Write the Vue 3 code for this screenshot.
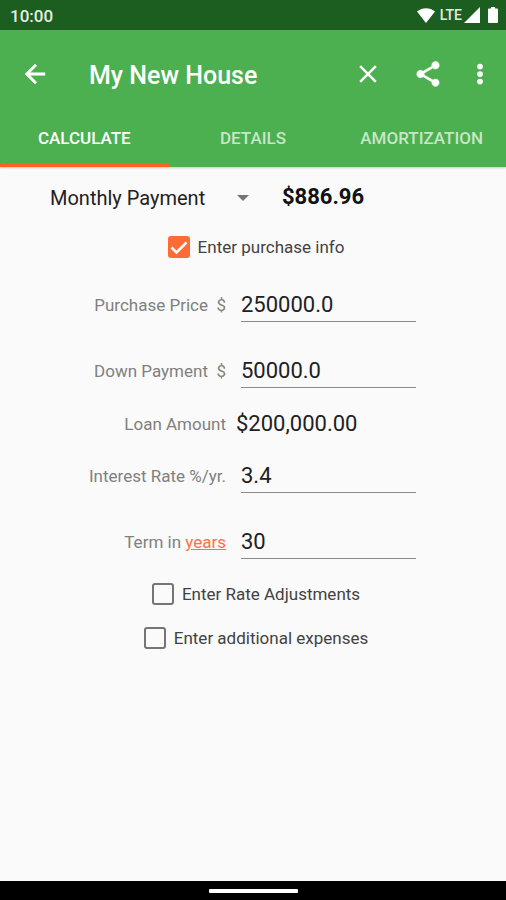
<script setup>
import { ref } from 'vue'

const tabs = ['Calculate', 'Details', 'Amortization']
const activeTab = ref('Calculate')
const mode = ref('Monthly Payment')
const purchaseInfo = ref(true)
const rateAdjustments = ref(false)
const extraExpenses = ref(false)
const price = ref('250000.0')
const down = ref('50000.0')
const rate = ref('3.4')
const term = ref('30')
</script>

<template>
  <div class="app">
    <div class="status">
      <span class="clock">10:00</span>
      <div class="signals">
        <svg class="wifi" viewBox="0 0 18 15" aria-hidden="true"><path d="M0 3.6C5 -1 13 -1 18 3.6L9 15z" /></svg>
        <span class="lte">LTE</span>
        <svg class="cell" viewBox="0 0 16 16" aria-hidden="true"><path d="M16 0v16H0z" /></svg>
        <svg class="battery" viewBox="0 0 10 16" aria-hidden="true"><path d="M3 0h4v1.6h2a1 1 0 0 1 1 1V15a1 1 0 0 1-1 1H1a1 1 0 0 1-1-1V2.6a1 1 0 0 1 1-1h2z" /></svg>
      </div>
    </div>

    <header class="header">
      <div class="toolbar">
        <button class="icon-button" type="button" aria-label="Back">
          <svg class="bold" viewBox="0 0 24 24"><path d="M20 11H7.83l5.59-5.59L12 4l-8 8 8 8 1.41-1.41L7.83 13H20v-2z" /></svg>
        </button>
        <h1 class="title">My New House</h1>
        <div class="actions">
          <button class="icon-button" type="button" aria-label="Clear">
            <svg viewBox="0 0 24 24"><path d="M19 6.41L17.59 5 12 10.59 6.41 5 5 6.41 10.59 12 5 17.59 6.41 19 12 13.41 17.59 19 19 17.59 13.41 12z" /></svg>
          </button>
          <button class="icon-button" type="button" aria-label="Share">
            <svg class="bold" viewBox="0 0 24 24"><path d="M18 16.08c-.76 0-1.44.3-1.96.77L8.91 12.7c.05-.23.09-.46.09-.7s-.04-.47-.09-.7l7.05-4.11c.54.5 1.25.81 2.04.81 1.66 0 3-1.34 3-3s-1.34-3-3-3-3 1.34-3 3c0 .24.04.47.09.7L8.04 9.81C7.5 9.31 6.79 9 6 9c-1.66 0-3 1.34-3 3s1.34 3 3 3c.79 0 1.5-.31 2.04-.81l7.12 4.16c-.05.21-.08.43-.08.65 0 1.61 1.31 2.92 2.92 2.92s2.92-1.31 2.92-2.92-1.31-2.92-2.92-2.92z" /></svg>
          </button>
          <button class="icon-button more" type="button" aria-label="More options">
            <svg viewBox="0 0 24 24"><circle cx="12" cy="6" r="2.3" /><circle cx="12" cy="12" r="2.3" /><circle cx="12" cy="18" r="2.3" /></svg>
          </button>
        </div>
      </div>
      <nav class="tabs">
        <button
          v-for="tab in tabs"
          :key="tab"
          type="button"
          class="tab"
          :class="{ active: tab === activeTab }"
          @click="activeTab = tab"
        >{{ tab }}</button>
      </nav>
    </header>

    <main class="content">
      <div class="summary">
        <div class="spinner">
          <select v-model="mode" aria-label="Calculate for">
            <option>Monthly Payment</option>
          </select>
          <svg viewBox="0 0 12 6" aria-hidden="true"><path d="M0 0h12L6 6z" /></svg>
        </div>
        <output class="payment">$886.96</output>
      </div>

      <label class="check">
        <input v-model="purchaseInfo" type="checkbox" />
        <span class="box"><svg viewBox="0 0 22 22"><path d="M3.5 11.5l5 5L18.5 6.5" /></svg></span>
        <span>Enter purchase info</span>
      </label>

      <div class="form">
        <label class="name" for="price">Purchase Price&nbsp; $</label>
        <input id="price" v-model="price" class="field" type="text" inputmode="decimal" />
        <label class="name" for="down">Down Payment&nbsp; $</label>
        <input id="down" v-model="down" class="field" type="text" inputmode="decimal" />
        <label class="name short" for="loan">Loan Amount</label>
        <output id="loan" class="loan">$200,000.00</output>
        <label class="name" for="rate">Interest Rate %/yr.</label>
        <input id="rate" v-model="rate" class="field" type="text" inputmode="decimal" />
        <div class="name"><label for="term">Term in</label>&nbsp;<a href="#">years</a></div>
        <input id="term" v-model="term" class="field" type="text" inputmode="numeric" />
      </div>

      <div class="options">
        <label class="check">
          <input v-model="rateAdjustments" type="checkbox" />
          <span class="box"><svg viewBox="0 0 22 22"><path d="M3.5 11.5l5 5L18.5 6.5" /></svg></span>
          <span>Enter Rate Adjustments</span>
        </label>
        <label class="check">
          <input v-model="extraExpenses" type="checkbox" />
          <span class="box"><svg viewBox="0 0 22 22"><path d="M3.5 11.5l5 5L18.5 6.5" /></svg></span>
          <span>Enter additional expenses</span>
        </label>
      </div>
    </main>

    <div class="navbar"><span class="pill"></span></div>
  </div>
</template>

<style>
body {
  margin: 0;
  background: #fafafa;
}
</style>

<style scoped>
.app {
  display: flex;
  flex-direction: column;
  min-height: 100vh;
  background: #fafafa;
  color: #212121;
  font-family: Roboto, "Liberation Sans", sans-serif;
  font-size: 17px;
}

button,
input,
select {
  font: inherit;
  color: inherit;
  border: 0;
  border-radius: 0;
  background: none;
  padding: 0;
  margin: 0;
  outline: none;
}

svg {
  display: block;
}

.status {
  display: flex;
  align-items: center;
  justify-content: space-between;
  height: 30px;
  padding: 0 8px 0 10px;
  background: #1b5e20;
  color: #fff;
}

.clock {
  padding-top: 1px;
  color: #e4ece4;
  font-size: 17px;
  font-weight: 500;
}

.signals {
  display: flex;
  align-items: center;
  fill: #fff;
}

.wifi {
  width: 18px;
  height: 15px;
}

.lte {
  margin: 0 2px 0 5px;
  color: #e4ece4;
  font-size: 14px;
  font-weight: 500;
}

.cell {
  width: 16px;
  height: 16px;
}

.battery {
  width: 10px;
  height: 16px;
  margin-left: 8px;
}

.header {
  background: #4caf50;
  color: #fff;
  box-shadow: 0 1px 2px rgba(0, 0, 0, 0.2);
}

.toolbar {
  display: flex;
  align-items: center;
  height: 82px;
  padding: 6px 11px 0 20px;
  box-sizing: border-box;
}

.icon-button {
  display: grid;
  place-items: center;
  width: 30px;
  height: 48px;
  fill: #fff;
}

.icon-button svg {
  width: 30px;
  height: 30px;
}

.icon-button .bold {
  stroke: #fff;
  stroke-width: 0.4;
}

.title {
  flex: 1;
  margin: 0 0 0 39px;
  padding-top: 2px;
  font-size: 25px;
  font-weight: 500;
}

.actions {
  display: flex;
  gap: 30px;
}

.more {
  margin-left: -8px;
}

.tabs {
  display: grid;
  grid-template-columns: repeat(3, 1fr);
  height: 55px;
}

.tab {
  border-bottom: 3px solid transparent;
  color: rgba(255, 255, 255, 0.7);
  font-weight: 500;
  text-transform: uppercase;
}

.tab.active {
  border-bottom-color: #ff6322;
  color: #fff;
}

.content {
  flex: 1;
}

.summary {
  display: grid;
  grid-template-columns: 202px 174px;
  justify-content: center;
  align-items: center;
  gap: 30px;
  height: 61px;
}

.spinner {
  position: relative;
  font-size: 20px;
}

.spinner select {
  width: 100%;
  height: 40px;
  appearance: none;
}

.spinner svg {
  position: absolute;
  top: 17px;
  right: 3px;
  width: 12px;
  height: 6px;
  fill: #757575;
  pointer-events: none;
}

.payment {
  padding-bottom: 2px;
  font-size: 22px;
  font-weight: 700;
  color: #111;
}

.check {
  position: relative;
  display: flex;
  align-items: center;
  gap: 8px;
  width: fit-content;
  height: 38px;
  margin: 0 auto;
  padding-left: 6px;
  color: #424242;
}

.check input {
  position: absolute;
  opacity: 0;
}

.box {
  width: 22px;
  height: 22px;
  box-sizing: border-box;
  border: 2px solid #757575;
  border-radius: 3px;
}

.box svg {
  display: none;
  fill: none;
  stroke: #fff;
  stroke-width: 2.6;
}

.check input:checked + .box {
  border: 0;
  background: #ff6b35;
}

.check input:checked + .box svg {
  display: block;
}

.form {
  display: grid;
  grid-template-columns: 141px 185px;
  justify-content: center;
  align-items: center;
  column-gap: 10px;
  margin-top: 6px;
}

.name {
  display: flex;
  align-items: center;
  justify-content: flex-end;
  height: 66px;
  color: #808080;
}

.name.short {
  height: 39px;
}

.name a {
  color: #ff7043;
}

.field {
  height: 32px;
  margin: 0 5px;
  border-bottom: 1px solid #8a8a8a;
  font-size: 22px;
}

.loan {
  font-size: 22px;
}

.options {
  display: grid;
  gap: 6px;
}

.navbar {
  display: grid;
  place-items: center;
  height: 19px;
  padding-top: 1px;
  box-sizing: border-box;
  background: #000;
}

.pill {
  width: 89px;
  height: 4px;
  border-radius: 1px;
  background: #fff;
}
</style>
